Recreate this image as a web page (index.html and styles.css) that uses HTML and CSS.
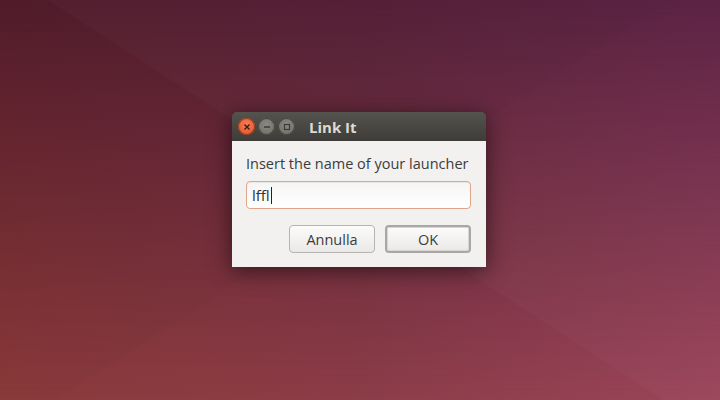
FILE: index.html
```html
<!DOCTYPE html>
<html lang="en">
<head>
    <meta charset="UTF-8">
    <title>Link It</title>
    <link rel="stylesheet" href="styles.css">
</head>
<body>
    <div class="desktop">
        <div class="window">
            <div class="titlebar">
                <div class="controls">
                    <span class="btn close">
                        <svg width="8" height="8" viewBox="0 0 8 8"><path d="M1.5 1.5L6.5 6.5M6.5 1.5L1.5 6.5" stroke="#3b1a10" stroke-width="1.4"/></svg>
                    </span>
                    <span class="btn">
                        <svg width="8" height="8" viewBox="0 0 8 8"><path d="M1 4H7" stroke="#3c3b37" stroke-width="1.4"/></svg>
                    </span>
                    <span class="btn">
                        <svg width="8" height="8" viewBox="0 0 8 8"><rect x="1.5" y="1.5" width="5" height="5" fill="none" stroke="#3c3b37" stroke-width="1.2"/></svg>
                    </span>
                </div>
                <span class="title">Link It</span>
            </div>
            <div class="content">
                <div class="label">Insert the name of your launcher</div>
                <div class="entry"><span>lffl</span><span class="caret"></span></div>
                <div class="actions">
                    <button class="button">Annulla</button>
                    <button class="button default">OK</button>
                </div>
            </div>
        </div>
    </div>
</body>
</html>
```

FILE: styles.css
```css
body {
    margin: 0;
    padding: 0;
    font-family: "Open Sans", "DejaVu Sans", sans-serif;
}
.desktop {
    width: 720px;
    height: 400px;
    position: relative;
    overflow: hidden;
    box-sizing: border-box;
    padding: 112px 0 0 232px;
    background: linear-gradient(to right, #531c2b 0%, #521d33 50%, #5a1f43 100%);
}
.desktop::before {
    content: "";
    position: absolute;
    inset: 0;
    background: linear-gradient(to right, #8c3a3a 0%, #8b3d48 50%, #9b4559 100%);
    -webkit-mask-image: linear-gradient(to bottom, transparent 0%, black 100%);
    mask-image: linear-gradient(to bottom, transparent 0%, black 100%);
}
.desktop::after {
    content: "";
    position: absolute;
    inset: 0;
    background:
        linear-gradient(33deg, transparent 49.6%, rgba(255,255,255,0.02) 49.8%, rgba(255,255,255,0.02) 100%),
        linear-gradient(-33deg, transparent 49.6%, rgba(0,0,0,0.02) 49.8%, rgba(0,0,0,0.02) 100%);
}
.window {
    position: relative;
    z-index: 1;
    width: 254px;
    border-radius: 5px 5px 0 0;
    overflow: hidden;
    box-shadow: 0 4px 22px rgba(0,0,0,0.55);
}
.titlebar {
    height: 29px;
    display: flex;
    align-items: center;
    background: linear-gradient(to bottom, #54534e, #3d3c38);
    padding-left: 6px;
}
.controls {
    display: flex;
    gap: 3px;
}
.btn {
    width: 17px;
    height: 17px;
    border-radius: 50%;
    display: flex;
    align-items: center;
    justify-content: center;
    background: radial-gradient(circle at 50% 40%, #8a8983, #6a6964);
    box-shadow: inset 0 0 0 1px #45443f;
}
.btn.close {
    background: radial-gradient(circle at 50% 40%, #f4805a, #df4b1f);
    box-shadow: inset 0 0 0 1px #9c3a1b;
}
.title {
    margin-left: 14px;
    color: #dfdbd2;
    font-weight: bold;
    font-size: 15px;
}
.content {
    background: #f2f1f0;
    padding: 11px 15px 13px 14px;
    height: 102px;
}
.label {
    color: #3c3c3c;
    font-size: 14.5px;
    line-height: 24px;
}
.entry {
    margin-top: 5px;
    height: 28px;
    box-sizing: border-box;
    border: 1px solid #dca68a;
    border-radius: 4px;
    background: linear-gradient(to bottom, #f6f5f4, #ffffff);
    display: flex;
    align-items: center;
    padding-left: 5px;
    font-size: 15px;
    color: #333;
    box-shadow: inset 0 1px 1px rgba(0,0,0,0.06);
}
.caret {
    width: 1px;
    height: 17px;
    background: #222;
    margin-left: 1px;
}
.actions {
    margin-top: 16px;
    display: flex;
    justify-content: flex-end;
    gap: 10px;
}
.button {
    width: 86px;
    height: 28px;
    font-family: inherit;
    font-size: 14.5px;
    color: #3c3c3c;
    border: 1px solid #b8b5b1;
    border-radius: 4px;
    background: linear-gradient(to bottom, #fbfbfa, #ebe9e7);
    padding: 0;
}
.button.default {
    border: 2px solid #a9a7a4;
    box-shadow: inset 0 0 0 1px #d8d6d3;
}
```
